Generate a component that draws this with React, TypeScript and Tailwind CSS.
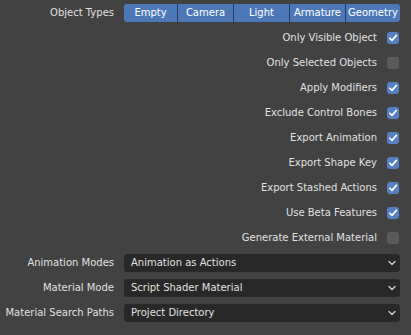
import React from 'react';

const font = { fontFamily: '"DejaVu Sans", sans-serif' };

const types = [
  { name: 'Empty', w: 'w-[53px]' },
  { name: 'Camera', w: 'w-[56px]' },
  { name: 'Light', w: 'w-[56px]' },
  { name: 'Armature', w: 'w-[56px]' },
  { name: 'Geometry', w: 'flex-1' },
];

const checks: [string, boolean][] = [
  ['Only Visible Object', true],
  ['Only Selected Objects', false],
  ['Apply Modifiers', true],
  ['Exclude Control Bones', true],
  ['Export Animation', true],
  ['Export Shape Key', true],
  ['Export Stashed Actions', true],
  ['Use Beta Features', true],
  ['Generate External Material', false],
];

const selects = [
  ['Animation Modes', 'Animation as Actions'],
  ['Material Mode', 'Script Shader Material'],
  ['Material Search Paths', 'Project Directory'],
];

const CheckBox = ({ on }: { on: boolean }) =>
  on ? (
    <div className="w-[12px] h-[12px] rounded-[3px] bg-[#5680c2] flex items-center justify-center">
      <svg width="10" height="10" viewBox="0 0 10 10">
        <path d="M1.8 5.2 L4 7.4 L8.4 2.4" stroke="#fff" strokeWidth="1.6" fill="none" strokeLinecap="round" strokeLinejoin="round" />
      </svg>
    </div>
  ) : (
    <div className="w-[12px] h-[12px] rounded-[3px] bg-[#5a5a5a]" />
  );

const App: React.FC = () => {
  return (
    <div className="w-[411px] h-[335px] bg-[#424242] text-[10px] text-[#e0e0e0] pr-[11px]" style={font}>
      {/* object types */}
      <div className="h-[25px] flex items-center">
        <div className="w-[114px] text-right">Object Types</div>
        <div className="ml-[10px] flex-1 flex h-[18px] rounded-[3px] overflow-hidden">
          {types.map((t, i) => (
            <div
              key={t.name}
              className={`${t.w} bg-[#4d78b8] text-white flex items-center justify-center ${i > 0 ? 'border-l border-[#2c3e5c]' : ''}`}
            >
              {t.name}
            </div>
          ))}
        </div>
      </div>

      {checks.map(([label, on]) => (
        <div key={label} className="h-[25px] flex items-center justify-end">
          <span>{label}</span>
          <div className="ml-[10px] mr-[1px]">
            <CheckBox on={on} />
          </div>
        </div>
      ))}

      {selects.map(([label, val]) => (
        <div key={label} className="h-[25px] flex items-center">
          <div className="w-[114px] text-right">{label}</div>
          <div className="ml-[10px] flex-1 h-[18px] rounded-[3px] bg-[#282828] flex items-center pl-[7px] pr-[4px]">
            <span className="flex-1">{val}</span>
            <svg width="8" height="6" viewBox="0 0 8 6">
              <path d="M1 1.5 L4 4.5 L7 1.5" stroke="#cfcfcf" strokeWidth="1.4" fill="none" strokeLinecap="round" strokeLinejoin="round" />
            </svg>
          </div>
        </div>
      ))}
    </div>
  );
};

export default App;
